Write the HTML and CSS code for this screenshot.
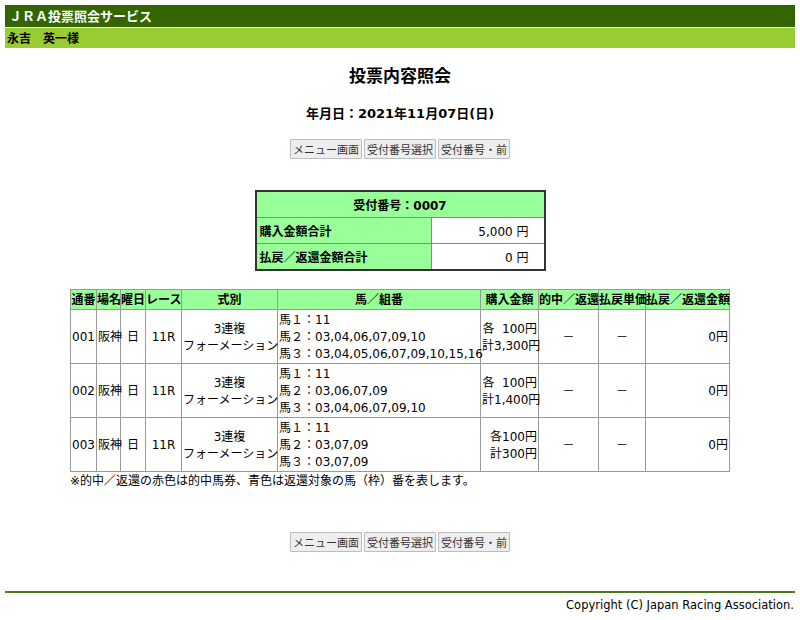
FILE: index.html
```html
<!DOCTYPE html>
<html lang="ja">
<head>
<meta charset="utf-8">
<title>JRA投票照会サービス</title>
<link rel="stylesheet" href="styles.css">
</head>
<body>
<div class="page">
  <div class="site-title">ＪＲＡ投票照会サービス</div>
  <div class="user-bar">永吉　英一様</div>

  <h1 class="page-title">投票内容照会</h1>
  <div class="date">年月日：2021年11月07日(日)</div>

  <div class="buttons">
    <button class="btn">メニュー画面</button>
    <button class="btn">受付番号選択</button>
    <button class="btn">受付番号・前</button>
  </div>

  <table class="summary">
    <tr><th colspan="2" class="summary-head">受付番号：0007</th></tr>
    <tr><th class="summary-label">購入金額合計</th><td class="summary-value">5,000 円</td></tr>
    <tr><th class="summary-label">払戻／返還金額合計</th><td class="summary-value">0 円</td></tr>
  </table>

  <table class="bets">
    <colgroup>
      <col class="c1"><col class="c2"><col class="c3"><col class="c4"><col class="c5">
      <col class="c6"><col class="c7"><col class="c8"><col class="c9"><col class="c10">
    </colgroup>
    <thead>
      <tr>
        <th>通番</th><th>場名</th><th>曜日</th><th>レース</th><th>式別</th>
        <th>馬／組番</th><th>購入金額</th><th>的中／返還</th><th>払戻単価</th><th>払戻／返還金額</th>
      </tr>
    </thead>
    <tbody>
      <tr>
        <td class="left">001</td><td class="left">阪神</td><td class="center">日</td><td class="center">11R</td>
        <td class="center">3連複<br>フォーメーション</td>
        <td class="left">馬１：11<br>馬２：03,04,06,07,09,10<br>馬３：03,04,05,06,07,09,10,15,16</td>
        <td class="right">各&nbsp;&nbsp;100円<br>計3,300円</td>
        <td class="center">－</td><td class="center">－</td><td class="right">0円</td>
      </tr>
      <tr>
        <td class="left">002</td><td class="left">阪神</td><td class="center">日</td><td class="center">11R</td>
        <td class="center">3連複<br>フォーメーション</td>
        <td class="left">馬１：11<br>馬２：03,06,07,09<br>馬３：03,04,06,07,09,10</td>
        <td class="right">各&nbsp;&nbsp;100円<br>計1,400円</td>
        <td class="center">－</td><td class="center">－</td><td class="right">0円</td>
      </tr>
      <tr>
        <td class="left">003</td><td class="left">阪神</td><td class="center">日</td><td class="center">11R</td>
        <td class="center">3連複<br>フォーメーション</td>
        <td class="left">馬１：11<br>馬２：03,07,09<br>馬３：03,07,09</td>
        <td class="right">各100円<br>計300円</td>
        <td class="center">－</td><td class="center">－</td><td class="right">0円</td>
      </tr>
    </tbody>
  </table>
  <p class="note">※的中／返還の赤色は的中馬券、青色は返還対象の馬（枠）番を表します。</p>

  <div class="buttons buttons-bottom">
    <button class="btn">メニュー画面</button>
    <button class="btn">受付番号選択</button>
    <button class="btn">受付番号・前</button>
  </div>

  <div class="footer">Copyright (C) Japan Racing Association.</div>
</div>
</body>
</html>
```

FILE: styles.css
```css
html, body {
  margin: 0;
  padding: 0;
  background: #ffffff;
}

body {
  font-family: "DejaVu Sans", "Noto Sans CJK JP", sans-serif;
  font-size: 12px;
  color: #000;
}

.page {
  padding: 5px 5px 0 5px;
}

.site-title {
  background: #336600;
  color: #ffffff;
  font-weight: bold;
  font-size: 13px;
  height: 22px;
  line-height: 22px;
  padding-left: 4px;
  font-family: "Noto Sans CJK JP", sans-serif;
}

.user-bar {
  margin-top: 1px;
  background: #99cc33;
  color: #000;
  font-weight: bold;
  font-size: 12px;
  height: 20px;
  line-height: 20px;
  padding-left: 2px;
  font-family: "Noto Sans CJK JP", sans-serif;
}

.page-title {
  margin: 16px 0 0 0;
  text-align: center;
  font-size: 17px;
  line-height: 22px;
  font-weight: bold;
  font-family: "Noto Sans CJK JP", sans-serif;
}

.date {
  margin-top: 19px;
  text-align: center;
  font-size: 13px;
  line-height: 18px;
  font-weight: bold;
}

.buttons {
  margin-top: 16px;
  display: flex;
  justify-content: center;
  gap: 2px;
}

.btn {
  font-family: "Noto Sans CJK JP", sans-serif;
  font-size: 11px;
  line-height: 15px;
  height: 20px;
  padding: 1px 2px;
  background: #eeeeee;
  border: 1px solid #bdbdbd;
  border-radius: 1px;
  color: #333;
  margin: 0;
}

.summary {
  margin: 31px auto 0 auto;
  border-collapse: collapse;
  border: 2px solid #333333;
  width: 291px;
}

.summary th, .summary td {
  border: 1px solid #888888;
  height: 25px;
  padding: 0 3px;
  font-size: 12px;
}

.summary-head {
  background: #99ff99;
  text-align: center;
  font-weight: bold;
}

.summary-label {
  background: #99ff99;
  text-align: left;
  font-weight: bold;
  width: 168px;
}

.summary-value {
  background: #ffffff;
  text-align: right;
  padding-right: 15px !important;
}

.bets {
  margin: 18px 0 0 65px;
  border-collapse: collapse;
  border: 1px solid #777777;
  table-layout: fixed;
  width: 660px;
}

.bets th, .bets td {
  border: 1px solid #999999;
  white-space: nowrap;
  font-size: 12px;
  overflow: visible;
}

.bets th {
  background: #99ff99;
  font-weight: bold;
  height: 19px;
  padding: 0;
  line-height: 18px;
  text-align: center;
}

.bets td {
  line-height: 17px;
  padding: 2px 1px 0 1px;
  vertical-align: middle;
}

.bets .left { text-align: left; }
.bets .center { text-align: center; }
.bets .right { text-align: right; }

.c1 { width: 26px; }
.c2 { width: 24px; }
.c3 { width: 25px; }
.c4 { width: 36px; }
.c5 { width: 96px; }
.c6 { width: 203px; }
.c7 { width: 58px; }
.c8 { width: 60px; }
.c9 { width: 47px; }
.c10 { width: 84px; }

.note {
  margin: 1px 0 0 65px;
  font-size: 12px;
  line-height: 17px;
}

.buttons-bottom {
  margin-top: 42px;
}

.footer {
  margin-top: 39px;
  border-top: 2px solid #4a7a1a;
  text-align: right;
  padding-top: 4px;
  font-size: 11.5px;
  line-height: 17px;
  padding-right: 1px;
}
```
